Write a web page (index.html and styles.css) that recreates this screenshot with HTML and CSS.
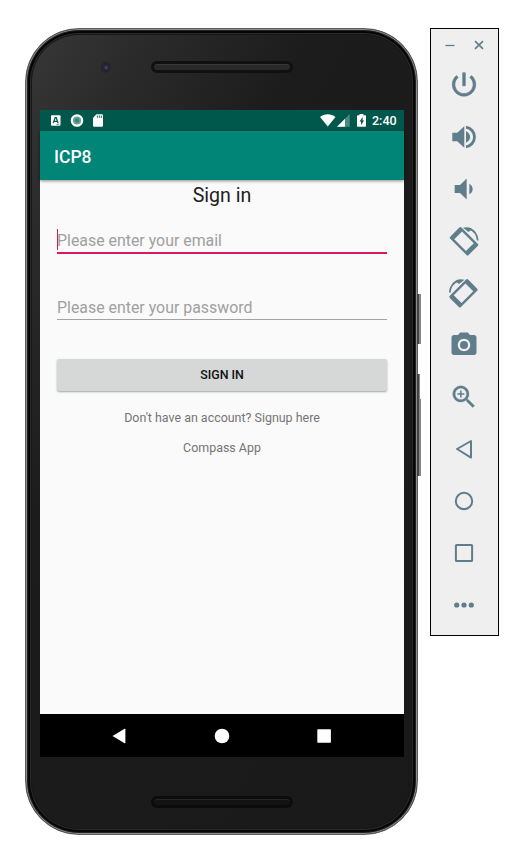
FILE: index.html
```html
<!DOCTYPE html>
<html lang="en">
<head>
<meta charset="utf-8">
<title>ICP8</title>
<link rel="stylesheet" href="styles.css">
</head>
<body>
<main class="desktop">
  <section class="phone">
    <i class="side-key power-key"></i>
    <i class="side-key volume-key"></i>
    <div class="bezel-top"><i class="camera"></i><i class="speaker"></i></div>
    <div class="screen">
      <div class="status-bar">
        <svg class="status-left" width="54" height="21" viewBox="0 0 54 21">
          <rect x="1" y="5.3" width="9.5" height="10.5" rx="1" fill="#fff"/>
          <path d="M3.3 13 5.2 7.6h1L8 13M4 11.3h3.4" fill="none" stroke="#00574b" stroke-width="1.3"/>
          <path d="M6.5 14.3h2.7" stroke="#00574b" stroke-width=".7"/>
          <circle cx="27" cy="10.5" r="5.2" fill="#69a49b" stroke="#fff" stroke-width="2.2"/>
          <circle cx="27" cy="10.5" r="2.2" fill="#398579"/>
          <path d="M46.500 4.300H52q1 0 1 1V15.700q0 1-1 1H44q-1 0-1-1V7.800z" fill="#fff"/>
          <path d="M47.400 5.500v2.300M49.400 5.500v2.300M51.300 5.500v2.300" stroke="#00574b" stroke-width=".9"/>
        </svg>
        <svg class="status-right" width="48" height="21" viewBox="0 0 48 21">
          <path d="M0 7C4.500 3.200 11 3.200 15.500 7L7.800 16.500z" fill="#fff"/>
          <path d="M29.700 4v12.800H17z" fill="#4d8981"/>
          <path d="M25 8.700v8.100h-8z" fill="#fff"/>
          <path d="M39.500 4h4v1.300h1.700q.8 0 .8.800V16q0 .8-.8.800h-7.400q-.8 0-.8-.8V6.100q0-.8.8-.8h1.700z" fill="#fff"/>
          <path d="M42.600 7l-3 4.400h1.500v3.700l3-4.600h-1.500z" fill="#00574b"/>
        </svg>
        <span class="clock">2:40</span>
      </div>
      <header class="app-bar">ICP8</header>
      <div class="content">
        <h1 class="title">Sign in</h1>
        <div class="field focused"><i class="caret"></i><span class="hint">Please enter your email</span></div>
        <div class="field password"><span class="hint">Please enter your password</span></div>
        <button class="submit"><span>SIGN IN</span></button>
        <p class="link signup"><span>Don't have an account? Signup here</span></p>
        <p class="link compass"><span>Compass App</span></p>
      </div>
      <nav class="nav-bar">
        <svg width="16" height="16" viewBox="0 0 16 16"><path d="M1.500 8 13.600.8q.8-.3.800.5v13.400q0 .8-.8.500z"/></svg>
        <svg width="16" height="16" viewBox="0 0 16 16"><circle cx="8" cy="8" r="7.300"/></svg>
        <svg width="16" height="16" viewBox="0 0 16 16"><rect x="1.300" y="1.300" width="13.600" height="13.400" rx=".7"/></svg>
      </nav>
    </div>
    <div class="bezel-bottom"><i class="speaker"></i></div>
  </section>

  <aside class="tools">
    <div class="window-row">
      <svg width="12" height="12" viewBox="0 0 12 12"><path d="M1.500 6.500h9" stroke-width="1.300"/></svg>
      <svg width="12" height="12" viewBox="0 0 12 12"><path d="M2 2.200l8 7.600M10 2.200 2 9.800" stroke-width="1.600"/></svg>
    </div>
    <div class="tool"><svg width="32" height="32" viewBox="0 0 24 24"><path d="M13 3h-2v10h2V3zm4.830 2.170l-1.420 1.420C17.990 7.860 19 9.810 19 12c0 3.870-3.130 7-7 7s-7-3.130-7-7c0-2.190 1.010-4.140 2.580-5.420L6.170 5.170C4.230 6.820 3 9.260 3 12c0 4.970 4.030 9 9 9s9-4.030 9-9c0-2.740-1.230-5.180-3.170-6.830z" stroke="#607d8b" stroke-width=".5" transform="translate(.3 -.1) scale(.975)"/></svg></div>
    <div class="tool"><svg width="32" height="32" viewBox="0 0 32 32"><path d="M4.300 11.800h4.900l7.100-6.600v21.600l-7.100-6.600H4.300zM18 10.300q4.100 2 4.100 5.700T18 21.700z"/><path d="M18 6.200A9.900 9.900 0 0 1 18 25.800" fill="none" stroke="#607d8b" stroke-width="2.800"/></svg></div>
    <div class="tool"><svg width="32" height="32" viewBox="0 0 24 24"><path d="M18.500 12c0-1.770-1.020-3.290-2.500-4.030v8.050c1.480-.73 2.500-2.250 2.500-4.020zM5 9v6h4l5 4.800V4.200L9 9H5z"/></svg></div>
    <div class="tool"><svg width="32" height="32" viewBox="0 0 32 32"><g id="rotate"><path fill-rule="evenodd" transform="translate(16 16.300) rotate(45)" d="M-11.500-7.900h23q1.500 0 1.500 1.500V6.400q0 1.500-1.500 1.500h-23q-1.500 0-1.500-1.500V-6.400q0-1.500 1.500-1.500zM-8.300-5.500V5.500H8.300V-5.500z"/><path d="M20.500 3.300A13.800 13.800 0 0 1 29.700 15.500" fill="none" stroke="#607d8b" stroke-width="1.800"/><path d="M15 2.800Q20.500 1.300 24.500 4L20.500 7z"/></g></svg></div>
    <div class="tool"><svg width="32" height="32" viewBox="0 0 32 32"><use href="#rotate" transform="translate(31.500 0) scale(-1 1)"/></svg></div>
    <div class="tool"><svg width="30" height="30" viewBox="0 0 24 24"><path fill-rule="evenodd" d="M9 2L7.170 4H4c-1.100 0-2 .9-2 2v12c0 1.100.9 2 2 2h16c1.100 0 2-.9 2-2V6c0-1.100-.9-2-2-2h-3.170L15 2H9zm3 15c-2.760 0-5-2.240-5-5s2.240-5 5-5 5 2.240 5 5-2.240 5-5 5z"/><circle cx="12" cy="12" r="3.200"/></svg></div>
    <div class="tool"><svg width="30" height="30" viewBox="0 0 24 24"><path d="M15.500 14h-.79l-.28-.27C15.410 12.590 16 11.110 16 9.500 16 5.910 13.090 3 9.500 3S3 5.910 3 9.500 5.910 16 9.500 16c1.610 0 3.090-.59 4.230-1.570l.27.280v.79l5 4.990L20.490 19l-4.990-5zm-6 0C7.010 14 5 11.990 5 9.500S7.010 5 9.500 5 14 7.010 14 9.500 11.990 14 9.500 14z" stroke="#607d8b" stroke-width=".2"/><path d="M9.500 6.700v5.600M6.700 9.500h5.600" stroke="#607d8b" stroke-width="1.200"/></svg></div>
    <div class="tool outline"><svg width="32" height="32" viewBox="0 0 32 32"><path d="M9 16 23 8v16.600z"/></svg></div>
    <div class="tool outline"><svg width="32" height="32" viewBox="0 0 32 32"><circle cx="16" cy="16" r="8.200"/></svg></div>
    <div class="tool outline"><svg width="32" height="32" viewBox="0 0 32 32"><rect x="7.900" y="7.900" width="16.200" height="16.200" rx=".7"/></svg></div>
    <div class="tool"><svg width="32" height="32" viewBox="0 0 32 32"><circle cx="8.700" cy="16" r="2.600"/><circle cx="16" cy="16" r="2.600"/><circle cx="23.300" cy="16" r="2.600"/></svg></div>
  </aside>
</main>
</body>
</html>
```
FILE: styles.css
```css
* { box-sizing: border-box; }
body { margin: 0; background: #fff; font-family: Roboto, "Liberation Sans", sans-serif; }
svg { display: block; flex: none; }
.desktop { display: flex; align-items: flex-start; gap: 12px; height: 866px; padding: 28px 0 0 25px; overflow: hidden; }

.phone {
  position: relative;
  display: flex;
  flex-direction: column;
  width: 393px;
  height: 807px;
  padding: 0 13px 0 14px;
  border: 1px solid #5c5c5c;
  border-radius: 54px;
  background: linear-gradient(120deg, #383838 0, #2b2b2b 14%, #1c1c1c 34%, #191919 100%);
  box-shadow: inset 0 0 0 1px #8c8c8c, inset 0 0 0 2px #222, inset 0 0 0 4px #050505, inset 0 0 0 5px #2a2a2a, inset 0 0 0 6px #171717;
}
.side-key { position: absolute; left: 391px; width: 4px; background: #8a8482; border-left: 2px solid #444; }
.power-key { top: 265px; height: 50px; }
.volume-key { top: 345px; height: 102px; }
.volume-key::before { content: ""; display: block; width: 2px; height: 25px; margin-left: 1px; background: #fff; }
.bezel-top { position: relative; height: 81px; flex: none; display: flex; justify-content: center; padding-top: 32px; }
.camera { position: absolute; left: 59px; top: 32px; width: 12px; height: 12px; border-radius: 50%; background: radial-gradient(circle at 60% 55%, #5b4a66 0, #26223a 25%, #252428 50%, #303030 70%); }
.speaker { width: 142px; height: 12px; margin-right: 1px; border: 3px solid #101010; border-radius: 6px; background: #292929; box-shadow: inset 0 1px #383838; }
.bezel-bottom { display: flex; justify-content: center; padding-top: 39px; }
.bezel-bottom .speaker { border-color: #0c0c0c; background: #131313; box-shadow: inset 0 1px #262626; }

.screen { display: flex; flex-direction: column; width: 364px; height: 647px; background: #fafafa; flex: none; }
.status-bar { display: flex; align-items: center; height: 21px; padding: 0 7px 0 10px; background: #00574b; color: #fff; }
.status-right { margin-left: auto; }
.clock { width: 25px; margin-left: 4px; font-size: 12.500px; line-height: 21px; font-weight: 500; white-space: nowrap; }
.app-bar { height: 49px; padding-left: 14px; background: #008577; color: #fff; font-size: 17.500px; font-weight: 500; line-height: 52px; box-shadow: 0 1px 3px rgba(0,0,0,.45); }
.content { display: flex; flex-direction: column; height: 534px; padding: 0 17px; }
.title { margin: 0; height: 46px; font-size: 19.600px; font-weight: 400; line-height: 31px; text-align: center; color: #212121; }
.field { position: relative; height: 28px; margin-bottom: 39px; border-bottom: 1px solid #a3a3a3; font-size: 15.900px; line-height: 29px; color: #a0a0a0; white-space: nowrap; }
.field.focused { margin-bottom: 38px; border-bottom: 2px solid #d81b60; }
.field.password { line-height: 31px; }
.caret { position: absolute; left: 0; top: 3px; width: 1px; height: 21px; background: #d81b60; }
.submit { height: 32px; margin: 0; padding: 0; border: 0; border-radius: 2px; background: #d6d7d7; box-shadow: 0 1px 2px rgba(0,0,0,.35); color: #111; font: 500 12.400px/32px Roboto, sans-serif; }
.link { margin: 0; text-align: center; font-size: 12.450px; line-height: 20px; color: #757575; }
.signup { margin-top: 17px; }
.compass { margin-top: 10px; }
.nav-bar { display: flex; justify-content: center; gap: 86.500px; align-items: center; height: 43px; padding: 0 1px 0 0; background: #000; }
.nav-bar svg { fill: #fff; }

.tools { width: 69px; height: 608px; padding: 2px 1px 0 0; border: 1px solid #000; background: #efefef; flex: none; }
.window-row { display: flex; justify-content: center; align-items: center; gap: 17px; height: 28px; }
.window-row svg { fill: none; stroke: #607d8b; }
.tool { display: flex; align-items: center; justify-content: center; height: 52px; fill: #607d8b; }
.outline { fill: none; stroke: #607d8b; stroke-width: 2; stroke-linejoin: round; }
```
